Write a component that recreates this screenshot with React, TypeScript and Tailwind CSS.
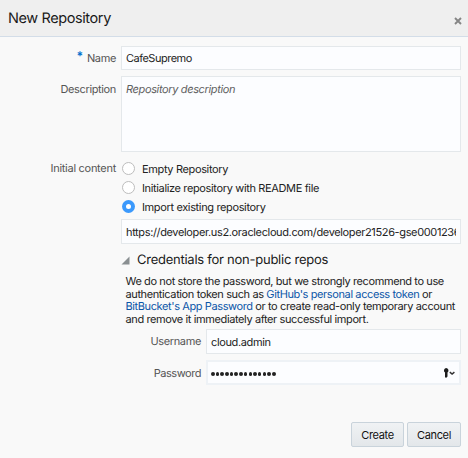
import type { ReactNode } from "react";

function Label({ children, className = "" }: { children: ReactNode; className?: string }) {
  return (
    <div className={`shrink-0 whitespace-nowrap text-right text-[#555555] ${className}`}>{children}</div>
  );
}

function Radio({ checked = false, children }: { checked?: boolean; children: ReactNode }) {
  return (
    <div className="flex h-[19px] items-center whitespace-nowrap">
      {checked ? (
        <span className="mr-[7.5px] ml-[0.5px] flex size-[13px] items-center justify-center rounded-full bg-[#3b99fc]">
          <span className="size-[5px] rounded-full bg-white" />
        </span>
      ) : (
        <span className="mr-[7.5px] ml-[0.5px] size-[13px] rounded-full border border-[#bdbdbd] bg-white" />
      )}
      <span className="pt-[2px]">{children}</span>
    </div>
  );
}

export default function App() {
  return (
    <div className="flex h-[458px] w-[468px] flex-col overflow-hidden bg-[#f9f9f9] font-['Inter','Liberation_Sans',sans-serif] text-[11px] leading-[13px] tracking-[-0.36px] text-[#222222] [text-rendering:geometricPrecision]">
      <header className="flex h-[37px] shrink-0 items-center justify-between border-b border-[#d3dde8] bg-[#efefef] pr-[6px] pl-2">
        <h1 className="pt-[2px] text-[14.5px] leading-5 tracking-[-0.4px] text-[#1a1a1a]">New Repository</h1>
        <svg className="mt-[6px] size-[8px]" viewBox="0 0 8 8" fill="none" stroke="#858585" strokeWidth="1.9">
          <path d="M1 1l6 6M7 1L1 7" />
        </svg>
      </header>

      <main className="flex flex-col pt-[9px] pr-[7px]">
        <div className="flex h-6">
          <Label className="w-[116px] pt-[6px]">
            <span className="relative -top-[2px] mr-[4px] text-[12px] font-bold leading-none text-[#0572ce]">*</span>
            Name
          </Label>
          <div className="ml-[5px] flex-1 border border-[#e4e8eb] bg-[#fcfdff] pt-[5px] pl-1 tracking-[-0.5px]">CafeSupremo</div>
        </div>

        <div className="mt-[6px] flex h-[76px]">
          <Label className="w-[116px] pt-[7px]">Description</Label>
          <div className="ml-[5px] flex-1 border border-[#e4e8eb] bg-[#fcfdff] pt-[6px] pl-1 text-[#606060] italic">
            Repository description
          </div>
        </div>

        <div className="mt-[7px] flex">
          <Label className="w-[116px] pt-[3px] tracking-[-0.28px]">Initial content</Label>
          <div className="ml-[5px] flex flex-col">
            <Radio>Empty Repository</Radio>
            <Radio>Initialize repository with README file</Radio>
            <Radio checked>Import existing repository</Radio>
          </div>
        </div>

        <div className="mt-[3px] ml-[121px] h-[25px] border border-[#e4e8eb] bg-[#fcfdff] px-1 pt-[6px]">
          <div className="overflow-hidden tracking-[-0.365px] whitespace-nowrap">
            https://developer.us2.oraclecloud.com/developer21526-gse0001236
          </div>
        </div>

        <section className="ml-[121px]">
          <div className="mt-[6px] flex h-[18px] items-center">
            <svg className="mt-[3px] mr-[7px] size-[9px]" viewBox="0 0 9 9">
              <path d="M8.5 0.5v8h-8z" fill="#8a8f92" />
            </svg>
            <h2 className="pt-[2px] text-[13px] tracking-[-0.25px] whitespace-nowrap text-[#1a1a1a]">
              Credentials for non-public repos
            </h2>
          </div>
          <div className="mt-[7px] ml-[4.5px] text-[11px] leading-[12.6px] tracking-[-0.39px] whitespace-nowrap">
            <div>We do not store the password, but we strongly recommend to use</div>
            <div>
              authentication token such as <a className="text-[#0b56a8]">GitHub's personal access token</a> or
            </div>
            <div>
              <a className="text-[#0b56a8]">BitBucket's App Password</a> or to create read-only temporary account
            </div>
            <div>and remove it immediately after successful import.</div>
          </div>
        </section>

        <div className="mt-[4px] flex h-[25px]">
          <Label className="w-[201px] pt-[6px]">Username</Label>
          <div className="ml-[5px] flex-1 border border-[#e4e8eb] bg-[#fcfdff] pt-[6px] pl-1 tracking-[-0.36px]">
            cloud.admin
          </div>
        </div>
        <div className="mt-[6px] flex h-[25px]">
          <Label className="w-[201px] pt-[7px] tracking-[-0.45px]">Password</Label>
          <div className="ml-[5px] flex flex-1 items-center justify-between border-2 border-[#eef2f6] bg-[#fcfdff] pr-1 pl-[3px]">
            <div className="flex gap-[1.1px] pt-[2px]">
              {Array.from({ length: 14 }, (_, i) => (
                <span key={i} className="size-[3.6px] rounded-full bg-[#222222]" />
              ))}
            </div>
            <svg className="h-[10px] w-[12px]" viewBox="0 0 12 10" fill="none">
              <path d="M3 0a2.5 2.5 0 0 1 1.5 4.5V8.5L3 10 2 9V4.5A2.5 2.5 0 0 1 3 0z" fill="#1c1c1c" />
              <path d="M6.8 4.2l2.3 1.8 2.3-1.8" stroke="#333333" strokeWidth="1.5" />
            </svg>
          </div>
        </div>

        <div className="mt-[37px] flex h-[25px] justify-end gap-[3px] text-[#111111]">
          <button className="w-[53px] rounded-[2px] border border-[#c9d3db] bg-linear-to-b from-[#f0f2f4] to-[#e3e7ea] pt-px">Create</button>
          <button className="w-[54px] rounded-[2px] border border-[#c9d3db] bg-linear-to-b from-[#f0f2f4] to-[#e3e7ea] pt-px">Cancel</button>
        </div>
      </main>
    </div>
  );
}
